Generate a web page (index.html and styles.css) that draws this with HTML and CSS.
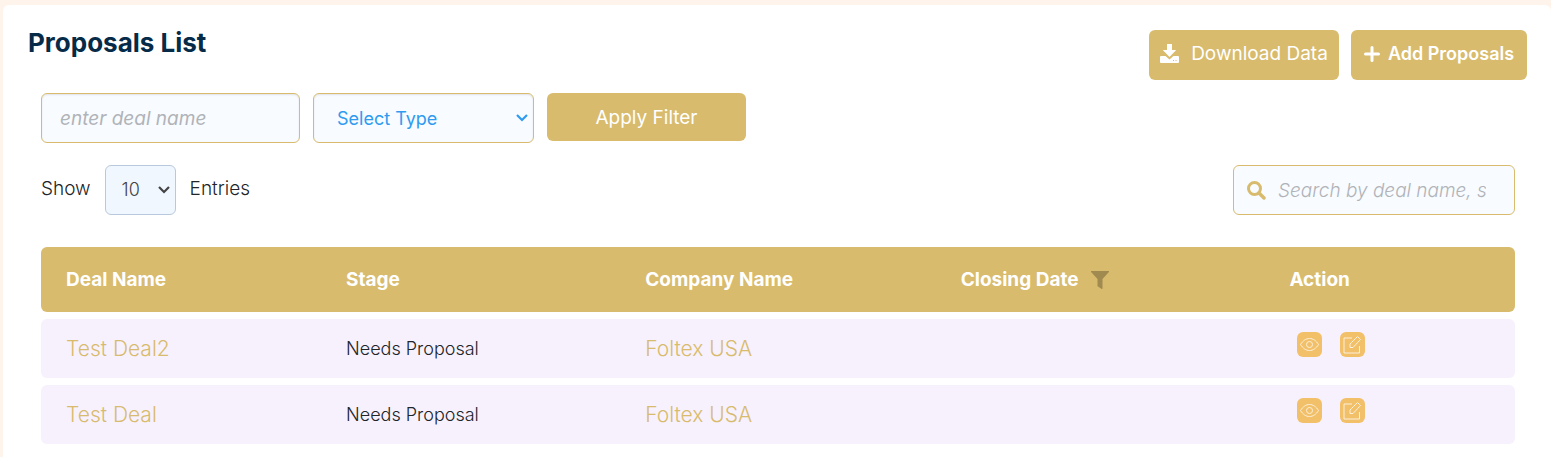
FILE: index.html
```
<!DOCTYPE html>
<html lang="en">
<head>
    <meta charset="UTF-8">
    <meta name="viewport" content="width=device-width, initial-scale=1.0">
    <title>Proposals List</title>
    <link rel="stylesheet" href="styles.css">
</head>
<body>
    <!-- Shared icons -->
    <svg class="icon-defs" aria-hidden="true">
        <symbol id="icon-eye" viewBox="0 0 25 25">
            <path d="M3.5 12.5C6 8.500 9 6.500 12.500 6.500s6.500 2 9 6c-2.500 4-5.500 6-9 6s-6.500-2-9-6z"/>
            <circle cx="12.500" cy="12.500" r="3"/>
        </symbol>
        <symbol id="icon-edit" viewBox="0 0 25 25">
            <path d="M12 6H4v15h15.500v-7"/>
            <path d="M10 15.500v-3.500l7.500-7.500 3 3-7.500 8z"/>
        </symbol>
    </svg>

    <main class="card">
        <header class="card-header">
            <h1>Proposals List</h1>
            <div class="header-buttons">
                <button class="button button-download" type="button">
                    <svg width="19" height="19" viewBox="0 0 19 19" aria-hidden="true">
                        <path fill="#fff" fill-rule="evenodd" d="M7 0h5v6h4.200l-6.700 7-6.700-7H7zM1 12h4.500l4 3.500 4-3.500H18a1 1 0 0 1 1 1v5a1 1 0 0 1-1 1H1a1 1 0 0 1-1-1v-5a1 1 0 0 1 1-1zM13 16v1h1v-1zM15.500 16v1h1v-1z"/>
                    </svg>
                    Download Data
                </button>
                <button class="button button-add" type="button">
                    <svg width="16" height="16" viewBox="0 0 16 16" aria-hidden="true">
                        <path d="M8 1.500v13M1.500 8h13" stroke="#fff" stroke-width="3" stroke-linecap="round"/>
                    </svg>
                    Add Proposals
                </button>
            </div>
        </header>

        <div class="card-body">
            <!-- Filters -->
            <form class="filters">
                <input class="field deal-input" type="text" placeholder="enter deal name" aria-label="Deal name">
                <select class="field type-select" aria-label="Type">
                    <option>Select Type</option>
                </select>
                <button class="button button-apply" type="button">Apply Filter</button>
            </form>

            <div class="toolbar">
                <div class="entries">
                    <label for="entries">Show</label>
                    <select class="field entries-select" id="entries">
                        <option>10</option>
                    </select>
                    <label for="entries">Entries</label>
                </div>
                <label class="field search">
                    <svg width="19" height="19" viewBox="0 0 19 19" fill="none" stroke="#d8bb6d" aria-hidden="true">
                        <circle cx="7.500" cy="7.500" r="6" stroke-width="3"/>
                        <path d="M12 12l5 5" stroke-width="3.500" stroke-linecap="round"/>
                    </svg>
                    <input type="text" placeholder="Search by deal name, stage" aria-label="Search">
                </label>
            </div>

            <!-- Proposals -->
            <table class="proposals">
                <thead>
                    <tr>
                        <th class="col-deal">Deal Name</th>
                        <th class="col-stage">Stage</th>
                        <th class="col-company">Company Name</th>
                        <th class="col-date">
                            <div class="date-heading">
                                Closing Date
                                <button class="date-filter" type="button" aria-label="Filter by closing date">
                                    <svg width="18" height="18" viewBox="0 0 18 18" aria-hidden="true">
                                        <path fill="#a08a50" d="M.5 0h17c.5 0 .7.600.4 1L11.500 8v9.500c0 .4-.5.600-.8.400L7 15.500c-.3-.2-.5-.5-.5-.8V8L.1 1C-.2.600 0 0 .5 0z"/>
                                    </svg>
                                </button>
                            </div>
                        </th>
                        <th class="col-action">Action</th>
                    </tr>
                </thead>
                <tbody>
                    <tr>
                        <td><a href="#">Test Deal2</a></td>
                        <td>Needs Proposal</td>
                        <td><a href="#">Foltex USA</a></td>
                        <td></td>
                        <td>
                            <div class="actions">
                                <button type="button" aria-label="View"><svg><use href="#icon-eye"/></svg></button>
                                <button type="button" aria-label="Edit"><svg><use href="#icon-edit"/></svg></button>
                            </div>
                        </td>
                    </tr>
                    <tr>
                        <td><a href="#">Test Deal</a></td>
                        <td>Needs Proposal</td>
                        <td><a href="#">Foltex USA</a></td>
                        <td></td>
                        <td>
                            <div class="actions">
                                <button type="button" aria-label="View"><svg><use href="#icon-eye"/></svg></button>
                                <button type="button" aria-label="Edit"><svg><use href="#icon-edit"/></svg></button>
                            </div>
                        </td>
                    </tr>
                </tbody>
            </table>
        </div>
    </main>
</body>
</html>
```
FILE: styles.css
```
/* General styles */
* {
    box-sizing: border-box;
}

body {
    display: flex;
    min-height: 100vh;
    margin: 0;
    padding: 5px 0 0 3px;
    font-family: Inter, "Open Sans", sans-serif;
    font-size: 19px;
    font-weight: 300;
    color: #212529;
    background-color: #fef4ec;
}

button, input, select {
    font: inherit;
}

button {
    cursor: pointer;
}

.icon-defs {
    display: none;
}

.card {
    flex: 1;
    min-width: 0;
    background-color: #fff;
    border-radius: 6px 6px 0 0;
}

/* Header */
.card-header {
    display: flex;
    justify-content: space-between;
    padding: 25px 24px 0 25px;
}

h1 {
    margin: 0;
    font-size: 26px;
    font-weight: 700;
    line-height: 25px;
    color: #062b49;
}

.header-buttons {
    display: flex;
    gap: 12px;
}

.button {
    display: flex;
    align-items: center;
    justify-content: center;
    gap: 12px;
    height: 50px;
    padding: 0 10px 3px;
    border: none;
    border-radius: 6px;
    background-color: #d8bb6d;
    color: #fff;
    font-weight: 400;
    white-space: nowrap;
}

.button-download {
    width: 190px;
}

.button-add {
    gap: 8px;
    width: 176px;
    font-size: 18px;
    font-weight: 600;
}

.button-apply {
    width: 199px;
    height: 48px;
    padding-bottom: 0;
}

/* Filters and toolbar */
.card-body {
    padding: 13px 36px 0 38px;
}

.filters {
    display: flex;
    gap: 13px;
}

.field {
    height: 50px;
    border: 1px solid #d8bb6d;
    border-radius: 6px;
    background-color: #f8fbff;
}

.deal-input {
    width: 259px;
    padding: 0 18px;
    font-weight: 400;
    box-shadow: inset 0 1px 2px rgba(0, 0, 0, 0.1);
}

::placeholder {
    color: #b0b3b8;
    font-style: italic;
    opacity: 1;
}

select {
    appearance: none;
    background-repeat: no-repeat;
    background-position: right 5px center;
}

.type-select {
    width: 221px;
    padding: 0 20px 0 23px;
    color: #2f9bf0;
    font-size: 18px;
    font-weight: 400;
    background-image: url("data:image/svg+xml,%3Csvg xmlns='http://www.w3.org/2000/svg' width='12' height='8' fill='none' stroke='%232f9bf0' stroke-width='2.200'%3E%3Cpath d='M1 1l5 5 5-5'/%3E%3C/svg%3E");
    box-shadow: inset 0 1px 2px rgba(0, 0, 0, 0.1);
}

.toolbar {
    display: flex;
    justify-content: space-between;
    margin-top: 22px;
}

.entries {
    display: flex;
    gap: 14px;
    line-height: 48px;
}

.entries-select {
    width: 71px;
    padding: 0 20px 0 16px;
    border-color: #b9c9dd;
    background-color: #f0f7ff;
    background-image: url("data:image/svg+xml,%3Csvg xmlns='http://www.w3.org/2000/svg' width='12' height='8' fill='none' stroke='%23444' stroke-width='2.200'%3E%3Cpath d='M1 1l5 5 5-5'/%3E%3C/svg%3E");
    color: #444;
    font-size: 18px;
}

.search {
    display: flex;
    align-items: center;
    gap: 12px;
    width: 282px;
    padding: 0 28px 0 13px;
}

.search svg {
    flex: none;
}

.search input {
    flex: 1;
    min-width: 0;
    padding: 0;
    border: none;
    outline: none;
    background: none;
}

/* Table */
.proposals {
    width: 100%;
    margin-top: 25px;
    border-collapse: separate;
    border-spacing: 0 7px;
    table-layout: fixed;
    font-size: 18px;
}

th, td {
    padding: 0 0 0 25px;
    text-align: left;
}

th {
    height: 65px;
    background-color: #d8bb6d;
    color: #fff;
    font-size: 19px;
    font-weight: 700;
}

td {
    height: 59px;
    background-color: #f7f1fe;
}

th:first-child, td:first-child {
    border-radius: 6px 0 0 6px;
}

th:last-child, td:last-child {
    border-radius: 0 6px 6px 0;
}

td a {
    color: #d8bb6d;
    font-size: 21px;
    text-decoration: none;
}

.col-deal {
    width: 19%;
}

.col-stage {
    width: 20.3%;
}

.col-company {
    width: 21.4%;
}

.col-date {
    width: 22.3%;
}

.date-heading {
    display: flex;
    align-items: center;
    gap: 12px;
}

.date-filter {
    padding: 0;
    border: none;
    background: none;
}

.date-filter svg {
    display: block;
}

.actions {
    display: flex;
    gap: 18px;
    padding: 0 0 8px 8px;
}

.actions button {
    width: 25px;
    height: 25px;
    padding: 0;
    border: none;
    border-radius: 6px;
    background-color: #f2c068;
}

.actions svg {
    display: block;
    width: 25px;
    height: 25px;
    fill: none;
    stroke: #fdf0dc;
    stroke-width: 1;
}
```
